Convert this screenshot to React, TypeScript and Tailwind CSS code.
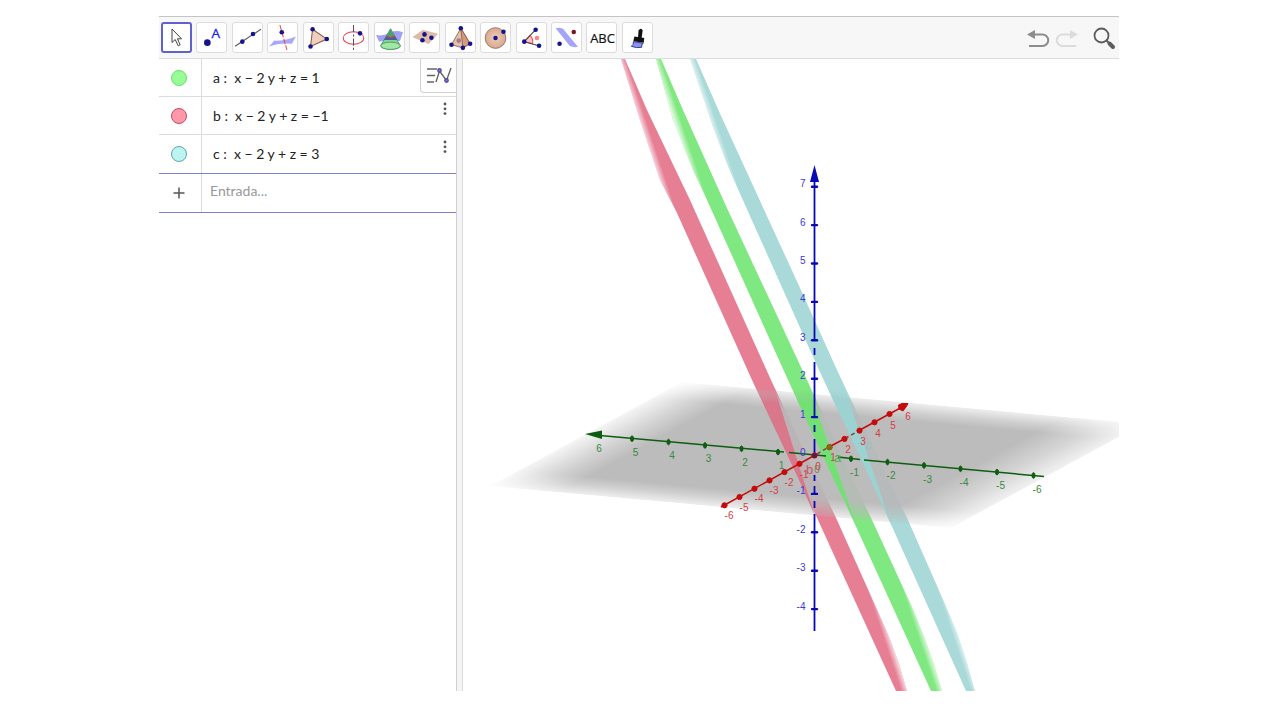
import type { ReactNode } from "react";

const NAVY = "#14148c";

const Dot = ({ x, y, r = 2.2, fill = NAVY }: { x: number; y: number; r?: number; fill?: string }) => (
  <circle cx={x} cy={y} r={r} fill={fill} />
);

// every tool icon is drawn on a 31 x 31 grid
const tools: { name: string; icon: ReactNode }[] = [
  {
    name: "Mover",
    icon: (
      <path d="M11 7v13.5l3.2-3 3 6.3 2-1-2.8-6h4.2z" fill="#fff" stroke="#444" strokeWidth="1" />
    ),
  },
  {
    name: "Punto",
    icon: (
      <>
        <Dot x={11} y={20} r={3.2} />
        <text x="15" y="15.5" fontSize="13" fill="#1c1cf0" stroke="#1c1cf0" strokeWidth="0.3" className="font-['Open_Sans',sans-serif]">A</text>
      </>
    ),
  },
  {
    name: "Recta",
    icon: (
      <>
        <path d="M3 23.5 28 7" stroke="#555" />
        <Dot x={10} y={19} />
        <Dot x={20.3} y={11.7} />
      </>
    ),
  },
  {
    name: "Recta perpendicular",
    icon: (
      <>
        <path d="M12.5 3 14.5 10" stroke="#f04050" />
        <path d="M2 24 7 18Q14 19 28 14L24 21Q12 20 2 24z" fill="#a9a9fb" />
        <path d="M14.5 10 19.3 27" stroke="#f04050" strokeDasharray="5 1.5" />
        <Dot x={14.3} y={10} />
      </>
    ),
  },
  {
    name: "Polígono",
    icon: (
      <>
        <path d="M9.3 7 23 16.5 7.3 23.7z" fill="#edd0c0" stroke="#8a5a44" />
        <Dot x={9.3} y={7} />
        <Dot x={23} y={16.5} />
        <Dot x={7.3} y={23.7} />
      </>
    ),
  },
  {
    name: "Circunferencia",
    icon: (
      <>
        <ellipse cx="15" cy="15.5" rx="10" ry="6" fill="none" stroke="#f03c4c" />
        <path d="M15 3v25" stroke="#555" strokeDasharray="7 2 2 2" />
        <Dot x={21.3} y={11} />
      </>
    ),
  },
  {
    name: "Intersección de superficies",
    icon: (
      <>
        <path d="M2 12.5Q9 14 15 10.5T28 10L25 18.5Q16 16 5 19z" fill="#a0a0f6" />
        <path d="M16 6.500 6.500 23Q7 26 16 26.500Q25 26 25.500 23z" fill="#86d492" stroke="#3c7c50" strokeWidth="0.7" />
        <path d="M16 6.500 12 13.500Q16 16 20 13.500z" fill="#4fa070" />
        <path d="M12 13.500 9.700 17.500Q16 17.500 22.500 17.500L20 13.500Q16 16 12 13.500z" fill="#4c5ca0" />
        <path d="M12 13.500Q16 16.500 20 13.500" fill="none" stroke="#d04040" />
        <ellipse cx="16" cy="23" rx="9.400" ry="3.500" fill="#a2e6a8" stroke="#3c8c50" strokeWidth="0.7" />
      </>
    ),
  },
  {
    name: "Plano por tres puntos",
    icon: (
      <>
        <path d="M4 14.500 13.500 8 27.500 11.500 19 21z" fill="#dfbba9" stroke="#cda590" strokeWidth="0.5" />
        <Dot x={15} y={12} />
        <Dot x={13} y={17.700} />
        <Dot x={21.700} y={15.300} />
      </>
    ),
  },
  {
    name: "Pirámide",
    icon: (
      <>
        <path d="M15.300 6 6.300 22 17.300 25 24.300 21z" fill="#e6bfa8" stroke="#8a5a44" strokeWidth="0.8" />
        <path d="M15.300 6 17.300 25 24.300 21z" fill="#d39c80" stroke="#8a5a44" strokeWidth="0.8" />
        <Dot x={13.300} y={18} fill="#9a7c9c" />
        <Dot x={15.300} y={6} />
        <Dot x={6.300} y={22} />
        <Dot x={17.300} y={25} />
        <Dot x={24.300} y={21} />
      </>
    ),
  },
  {
    name: "Esfera",
    icon: (
      <>
        <circle cx="15" cy="15.5" r="10" fill="url(#ball)" stroke="#8a6a5a" strokeWidth="0.8" />
        <Dot x={15} y={15.5} />
        <Dot x={22.7} y={9.5} />
      </>
    ),
  },
  {
    name: "Ángulo",
    icon: (
      <>
        <path d="M8 19 13.5 13Q17 16 16 21z" fill="#fcc4c4" stroke="#f05050" />
        <path d="M19 7.5 8 19 22 23" fill="none" stroke="#444" />
        <Dot x={20.3} y={15.5} fill="#f48c84" />
        <Dot x={19} y={7.5} />
        <Dot x={8} y={19} />
        <Dot x={22.3} y={23} />
      </>
    ),
  },
  {
    name: "Simetría especular",
    icon: (
      <>
        <path d="M4.5 6Q9 5 12 7L26 24Q22 25 18 23z" fill="#a4a4fb" />
        <Dot x={22} y={9.7} fill="#7c1420" />
        <Dot x={8.3} y={21} />
      </>
    ),
  },
  {
    name: "Texto",
    icon: (
      <text x="16" y="20" fontSize="12.5" textAnchor="middle" fill="#111" stroke="#111" strokeWidth="0.2" className="font-['Open_Sans',sans-serif]">ABC</text>
    ),
  },
  {
    name: "Estilo visual",
    icon: (
      <>
        <path d="M16 8Q18.500 5 20 8L19 15.500H15.500z" fill="#111" />
        <path d="M12 14 21.500 15.500 21 20 11 18.500z" fill="#111" />
        <path d="M11 19 20.500 20.500Q18.500 22 19 24.500Q14 25.500 9 23.500Q11.500 22 11 19z" fill="#8a94e8" stroke="#222288" strokeWidth="0.8" />
      </>
    ),
  },
];

const equations = [
  { id: "a", rhs: "1", fill: "bg-[#98fb98]", ring: "border-[#5ce65c]" },
  { id: "b", rhs: "−1", fill: "bg-[#ff98a8]", ring: "border-[#cc4860]" },
  { id: "c", rhs: "3", fill: "bg-[#bdf3f0]", ring: "border-[#5ca8a8]" },
];

const strips = [
  {
    id: "b",
    dx: 0,
    color: "#e67f94",
    front: "#d9788b",
    shape: "M621 59 625 59 647 110 690 200 771 380 837 520 875 605 890 639 899 664 907 691 896 691 818 520 752 380 677 213 660 180 640 120z",
    frontShape: "M752 380 771 380 776 393 815 516 799 480z",
  },
  {
    id: "a",
    dx: 35,
    color: "#80e880",
    front: "#72e072",
    shape: "M656 59 661 59 683 110 726 206 800 365 872 520 912 607 925 639 934 664 942 691 931 691 853 520 788 380 707 200 693 170 673 120z",
    frontShape: "M788 380 807 380 811 394 855 522 834 480z",
  },
  {
    id: "c",
    dx: 70,
    color: "#a9dad9",
    front: "#9cd2d2",
    shape: "M690 59 696 59 722 118 800 288 837 370 908 520 945 604 958 635 967 663 975 691 966 691 889 520 819 370 737 187 727 164 713 127z",
    frontShape: "M824 380 841 380 847 396 891 524 866 470z",
  },
];

const zTicks = [7, 6, 5, 4, 3, 2, 1, 0, -1, -2, -3, -4];
const yTicks = [6, 5, 4, 3, 2, 1, -1, -2, -3, -4, -5, -6];
const xTicks = [-6, -5, -4, -3, -2, -1, 0, 1, 2, 3, 4, 5, 6];

function Scene() {
  return (
    <svg
      viewBox="463 59 656 632"
      preserveAspectRatio="xMidYMin slice"
      className="absolute inset-0 h-full w-full font-['Liberation_Sans',sans-serif]"
      role="img"
      aria-label="Vista gráfica 3D"
    >
      <defs>
        <linearGradient id="fadeX">
          <stop offset="0" stopColor="#b8b8b8" stopOpacity="0.14" />
          <stop offset="0.08" stopColor="#b8b8b8" stopOpacity="0.6" />
          <stop offset="0.15" stopColor="#b8b8b8" stopOpacity="0.94" />
          <stop offset="0.83" stopColor="#b8b8b8" stopOpacity="0.94" />
          <stop offset="0.92" stopColor="#b8b8b8" stopOpacity="0.6" />
          <stop offset="1" stopColor="#b8b8b8" stopOpacity="0.2" />
        </linearGradient>
        <linearGradient id="fadeY" x2="0" y2="1">
          <stop offset="0" stopColor="#fff" stopOpacity="0.25" />
          <stop offset="0.08" stopColor="#fff" stopOpacity="0.7" />
          <stop offset="0.15" stopColor="#fff" />
          <stop offset="0.85" stopColor="#fff" />
          <stop offset="0.92" stopColor="#fff" stopOpacity="0.7" />
          <stop offset="1" stopColor="#fff" stopOpacity="0.25" />
        </linearGradient>
        <mask id="floorMask" maskContentUnits="objectBoundingBox">
          <rect width="1" height="1" fill="url(#fadeY)" />
        </mask>
        {strips.map((s) => (
          <g key={s.id}>
            <linearGradient id={`top-${s.id}`} gradientUnits="userSpaceOnUse" x1="619" y1="59" x2="625" y2="57" gradientTransform={`translate(${s.dx} 0)`}>
              <stop offset="0" stopColor="#fff" stopOpacity="0.75" />
              <stop offset="1" stopColor="#fff" stopOpacity="0" />
            </linearGradient>
            <linearGradient id={`end-${s.id}`} gradientUnits="userSpaceOnUse" x1="908" y1="691" x2="902" y2="693" gradientTransform={`translate(${s.dx} 0)`}>
              <stop offset="0" stopColor="#fff" stopOpacity="0.75" />
              <stop offset="1" stopColor="#fff" stopOpacity="0" />
            </linearGradient>
            <linearGradient id={`front-${s.id}`} gradientUnits="userSpaceOnUse" x1="0" y1="387" x2="0" y2="403">
              <stop offset="0" stopColor={s.front} stopOpacity="0" />
              <stop offset="1" stopColor={s.front} />
            </linearGradient>
          </g>
        ))}
      </defs>

      {strips.map((s) => (
        <g key={s.id}>
          <path d={s.shape} fill={s.color} />
          <path d={s.shape} fill={`url(#top-${s.id})`} />
          <path d={s.shape} fill={`url(#end-${s.id})`} />
        </g>
      ))}

      {/* xy plane */}
      <g transform="matrix(461 42 192 -104 490 486)">
        <rect width="1" height="1" fill="url(#fadeX)" mask="url(#floorMask)" />
      </g>
      {strips.map((s) => (
        <path key={s.id} d={s.frontShape} fill={`url(#front-${s.id})`} />
      ))}

      {/* y axis */}
      <g stroke="#0d5d10" fill="#0d5d10">
        <path d="M600 435.5 784 452M789 452.5 826 456M838 457 860 459.5M864 460 1044 476.5" strokeWidth="1.5" />
        <path d="M585 434 602 430.5V439z" stroke="none" />
        {yTicks.slice(1).map((n) => (
          <ellipse key={n} cx={814.5 - n * 36.5} cy={455.4 - n * 3.34} rx="1.5" ry="2.8" />
        ))}
      </g>
      <g fontSize="10" textAnchor="middle" fill="#3a8a3c">
        {yTicks.map((n) => (
          <text key={n} x={818 - n * 36.5} y={472.5 - n * 3.35}>{n}</text>
        ))}
        <text x="817" y="473" fill="#6c8a54">0</text>
      </g>

      {/* z axis */}
      <g stroke="#0a0ab4" fill="#0a0ab4" strokeWidth="1.8">
        <path d="M814.5 178V341M814.5 348V355M814.5 362V418M814.5 425V432M814.5 439V456M814.5 475V481M814.5 486V495M814.5 501V508M814.5 514V631" />
        <path d="M814.5 165 819 182H810z" stroke="none" />
        {zTicks.filter((n) => n !== 0).map((n) => (
          <path key={n} d={`M812 ${455.5 - n * 38.4}h5`} strokeWidth="2.4" strokeLinecap="round" />
        ))}
      </g>
      <g fontSize="10" textAnchor="end" fill="#3a3ad8">
        {zTicks.map((n) => (
          <text key={n} x="805.5" y={456 - n * 38.4}>{n}</text>
        ))}
      </g>

      {/* x axis */}
      <g stroke="#c40c0c" fill="#c40c0c">
        <path d="M721 507 817 454M829 447 845 438.5M859 430.5 904 406" strokeWidth="1.5" />
        <path d="M817 454 829 447M845 438.5 859 430.5" stroke="#84443c" strokeDasharray="4 3" strokeWidth="1.5" />
        {xTicks.slice(0, -1).map((n) => (
          <circle key={n} cx={814.5 + n * 15} cy={455.5 - n * 8.3} r="2.6" />
        ))}
        <path d="M898.5 405 902 403.5 908 403.5 906 407 903 411 899 409z" strokeLinejoin="round" />
        <circle cx="814.5" cy="455.5" r="2.6" fill="#5c1c3c" stroke="none" />
        <circle cx="829.5" cy="447.2" r="2.6" fill="#7c6c10" stroke="none" />
      </g>
      <g fontSize="10" textAnchor="middle" fill="#d24048">
        {xTicks.map((n) => (
          <text key={n} x={(n < 0 ? 819 : 818) + n * 15} y={469.5 - n * 8.2}>{n}</text>
        ))}
      </g>

      <g fontSize="13">
        <text x="806" y="474" fill="#c8586c">b</text>
        <text x="834" y="462" fill="#4cae4c">a</text>
        <text x="865" y="449" fill="#88c8c8">c</text>
      </g>
    </svg>
  );
}

function Toolbar() {
  return (
    <header className="flex h-[43px] items-center border-y border-t-[#c4c4c4] border-b-[#dcdcdc] bg-[#f7f7f7] pl-0.5">
      <svg className="absolute h-0 w-0" aria-hidden="true">
        <defs>
          <radialGradient id="ball">
            <stop offset="0" stopColor="#f0cdb8" />
            <stop offset="1" stopColor="#d8a890" />
          </radialGradient>
        </defs>
      </svg>
      <div className="flex w-[492px] justify-between">
        {tools.map((tool, i) => (
          <button
            key={tool.name}
            aria-label={tool.name}
            className={`h-[31px] w-[31px] rounded-[3px] bg-white ${i === 0 ? "border-2 border-[#6060d0]" : "border border-[#dcdcdc]"}`}
          >
            <svg viewBox={i === 0 ? "2 2 27 27" : "1 1 28 28"} className="h-full w-full">{tool.icon}</svg>
          </button>
        ))}
      </div>
      <div className="ml-auto flex items-center gap-[5px] pr-[3px]">
        <button aria-label="Deshacer" className="text-[#8c8c8c]">
          <svg width="24" height="24" viewBox="0 0 24 24" fill="none" stroke="currentColor" strokeWidth="2">
            <path d="M6 8.5H16.500A5.200 5.200 0 0 1 16.500 20H3" />
            <path d="M1 8.500 9 4V13z" fill="currentColor" stroke="none" />
          </svg>
        </button>
        <button aria-label="Rehacer" className="text-[#dcdcdc]">
          <svg width="24" height="24" viewBox="0 0 24 24" fill="none" stroke="currentColor" strokeWidth="2">
            <path d="M18 8.500H7.500A5.200 5.200 0 0 0 7.500 20H21" />
            <path d="M23 8.500 15 4V13z" fill="currentColor" stroke="none" />
          </svg>
        </button>
        <button aria-label="Buscar" className="ml-2">
          <svg width="24" height="24" viewBox="0 0 24 24" fill="none" stroke="#5c5c5c" strokeLinecap="round">
            <circle cx="9.5" cy="9.5" r="7" strokeWidth="1.8" />
            <path d="M14.5 14.5 17 17" strokeWidth="2" />
            <path d="M17.5 17.5 21 21" strokeWidth="4" />
          </svg>
        </button>
      </div>
    </header>
  );
}

function AlgebraView() {
  return (
    <aside className="relative w-[298px] shrink-0 border-r border-[#d0d0d0] font-[Lato,sans-serif] text-sm text-[#222]">
      {equations.map((eq, i) => (
        <div key={eq.id} className={`flex h-[38px] ${i < 2 ? "border-b border-[#dcdcdc]" : ""}`}>
          <div className="flex w-[43px] shrink-0 items-center justify-center border-r border-[#dcdcdc] pr-[3px]">
            <button aria-label={`Mostrar ${eq.id}`} className={`h-4 w-4 rounded-full border ${eq.fill} ${eq.ring}`} />
          </div>
          <div className="flex flex-1 items-center whitespace-pre pl-[11px]">
            {`${eq.id} :  x − 2 y + z = ${eq.rhs}`}
          </div>
          {i > 0 && (
            <button aria-label="Más opciones" className="mt-1 h-4 w-[22px]">
              <svg viewBox="0 0 22 16" className="h-full w-full" fill="#555">
                <circle cx="11" cy="3" r="1.4" />
                <circle cx="11" cy="7.8" r="1.4" />
                <circle cx="11" cy="12.6" r="1.4" />
              </svg>
            </button>
          )}
        </div>
      ))}
      <div className="flex h-10 border-y border-[#8080c8]">
        <label htmlFor="entrada" className="flex w-[43px] shrink-0 items-center justify-center border-r border-[#dcdcdc] pr-[3px]">
          <svg width="12" height="12" viewBox="0 0 12 12" stroke="#555" strokeWidth="1.5" aria-label="Nueva entrada">
            <path d="M6 0.5v11M0.5 6h11" />
          </svg>
        </label>
        <input id="entrada" placeholder="Entrada..." className="min-w-0 flex-1 bg-transparent pb-1 pl-2 outline-none placeholder:text-[#999]" />
      </div>
      <button
        aria-label="Barra de estilo"
        className="absolute right-0 top-0 h-[34px] w-9 rounded-bl border-b border-l border-[#d0d0d0] bg-white"
      >
        <svg viewBox="0 0 35 33" className="h-full w-full" fill="none" stroke="#666" strokeWidth="1.4">
          <path d="M6 10h10M6 16.5h8M6 23h7" />
          <path d="M15 23 18.5 12 25.5 21.5 30 9" />
          <circle cx="18.5" cy="11.5" r="1.7" fill="#7878d0" stroke="#5050a0" />
          <circle cx="25.5" cy="21.5" r="1.7" fill="#7878d0" stroke="#5050a0" />
        </svg>
      </button>
    </aside>
  );
}

export default function App() {
  return (
    <div className="flex min-h-screen flex-col bg-white pb-[29px] pl-[159px] pr-[161px] pt-4">
      <Toolbar />
      <main className="flex flex-1">
        <AlgebraView />
        <div className="w-1.5 shrink-0 border-r border-[#dcdcdc] bg-[#f4f4f4]" />
        <section className="relative min-w-0 flex-1 overflow-hidden">
          <Scene />
        </section>
      </main>
    </div>
  );
}
